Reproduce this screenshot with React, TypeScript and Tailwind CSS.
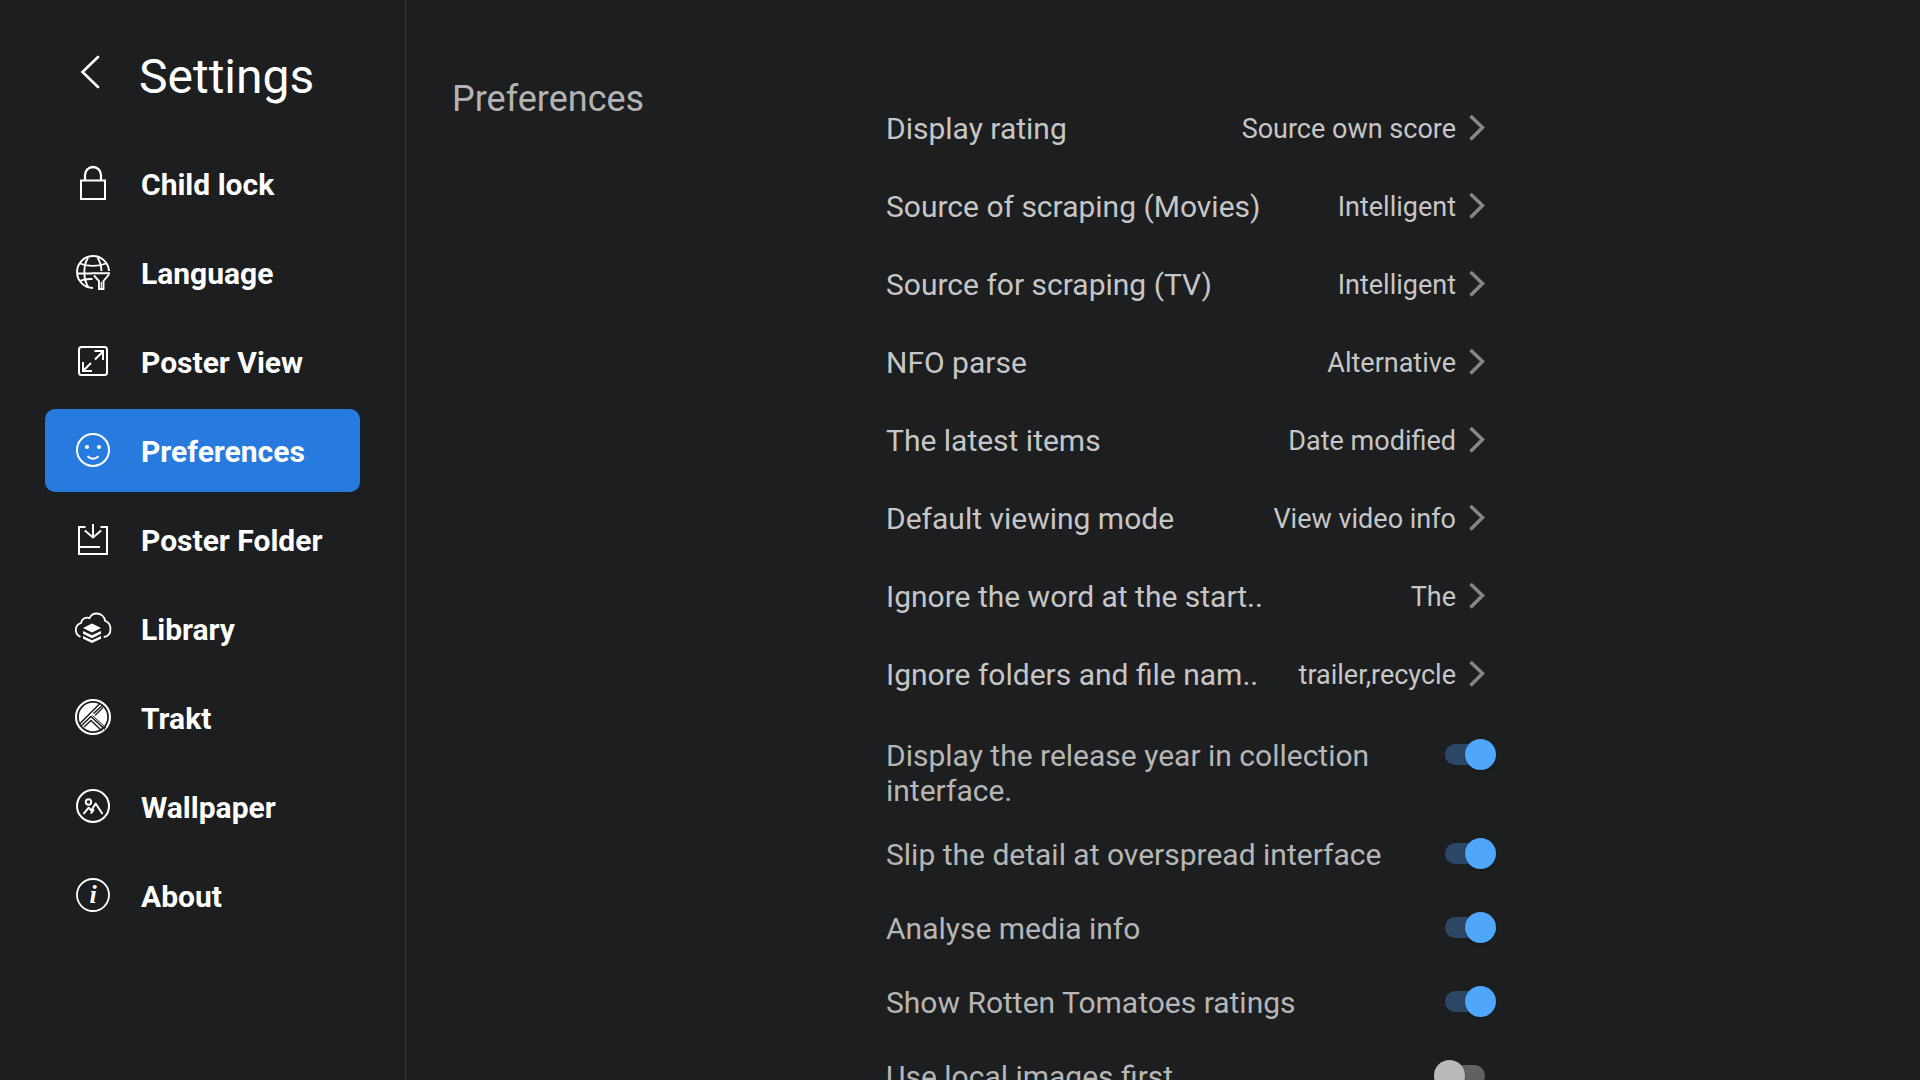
import { useId, useState } from 'react';
import type { ReactNode } from 'react';
import { clsx } from 'clsx';

interface IconProps {
  children: ReactNode;
}

function NavIcon({ children }: IconProps) {
  return (
    <svg
      viewBox="0 0 36 35"
      className="h-[35px] w-9 shrink-0 overflow-visible"
      fill="none"
      stroke="currentColor"
      strokeWidth="2"
      aria-hidden="true"
    >
      {children}
    </svg>
  );
}

const LockIcon = () => (
  <NavIcon>
    <rect x="6" y="14.5" width="24" height="18.5" />
    <path d="M10 14V9a8 8 0 0 1 16 0v5" strokeWidth="2.3" />
  </NavIcon>
);

const GlobeIcon = () => (
  <NavIcon>
    <g strokeWidth="1.9">
      <path d="M18 33A16 16 0 1 1 34 16" />
      <path d="M13 2.8C8 11 8 24 13.5 32.5M22.5 2.5c2.5 4 3.8 8.500 4 13.500" />
      <path d="M5 8.500c7 3.200 19 3.200 26 0M2.200 18.500H17M4.500 26c4-1.800 8-2.300 13-2" />
      <path d="M16.500 18.300H35M19 20.500l5 5.500v8h4.500v-8l5.500-6.500" />
      <path d="M26.300 27v7" strokeWidth="1.200" />
    </g>
  </NavIcon>
);

const ExpandIcon = () => (
  <NavIcon>
    <rect x="4" y="3" width="28" height="28" rx="2.500" />
    <path d="M19.500 7h8.500v9M28 7.500l-8 8M17 27H8v-9M8.500 26.500l7.500-7.500" />
  </NavIcon>
);

const SmileIcon = () => (
  <NavIcon>
    <circle cx="18" cy="17" r="16" />
    <circle cx="12" cy="14" r="2.100" fill="currentColor" stroke="none" />
    <circle cx="24" cy="14" r="2.100" fill="currentColor" stroke="none" />
    <path d="M12.500 23.200c3 3.400 8 3.400 11 0" />
  </NavIcon>
);

const FolderIcon = () => (
  <NavIcon>
    <path d="M10.500 5H4v27h28V5h-6.500M4 25h21" />
    <path d="M18 2v13M9.800 8.500l8.200 7 8.200-7" />
  </NavIcon>
);

const LibraryIcon = () => (
  <NavIcon>
    <path
      d="M5.500 26C2.500 24.500.8 22.300.8 19c0-3.600 2.400-6.300 5.400-7.200C6.500 8 10.500 5.500 14.500 7.200 16 4 18.500 2.500 21.500 2.500c4.500 0 8 3 8.800 7.500 3.300 1.200 5.200 4.200 5.200 8 0 4.500-2.500 7.500-6.800 8"
      strokeWidth="1.800"
    />
    <g fill="currentColor" stroke="none">
      <path d="m17 12.500 9 4.400-9 4.500-9-4.500z" />
      <path d="m8 20 9 4.300 9-4.300v2.800l-9 4.400-9-4.400z" />
      <path d="m8 25 9 4.300 9-4.300v2.800L17 32l-9-4.200z" />
    </g>
  </NavIcon>
);

const TraktIcon = () => (
  <NavIcon>
    <circle cx="18" cy="17" r="17" strokeWidth="2.100" />
    <circle cx="18" cy="17" r="14.200" fill="currentColor" stroke="none" />
    <g stroke="#1d1e20" strokeWidth="1.500">
      <path d="M5 23.500 24.500 4M18.500 13.500 28 5M6.500 25.500l9.500-9L30 29.500M9 27l7-6.500 11 10.500" />
      <path d="M17.500 15.500 31 28" strokeWidth="1" />
      <path d="m20 15.500 8-8" strokeWidth="1.200" />
    </g>
  </NavIcon>
);

const WallpaperIcon = () => (
  <NavIcon>
    <circle cx="18" cy="17" r="16" />
    <circle cx="13.500" cy="13" r="2.700" />
    <path
      d="m9 24.300 4.700-5.600 2.600 2.800 4.400-7 6.300 9.800M18.500 21l-2.200 3"
      strokeLinecap="round"
      strokeLinejoin="round"
    />
  </NavIcon>
);

const InfoIcon = () => (
  <NavIcon>
    <circle cx="18" cy="17" r="16" strokeWidth="1.800" />
    <text
      x="18"
      y="25"
      textAnchor="middle"
      fill="currentColor"
      stroke="none"
      className="font-['Liberation_Serif',serif] text-[26px] font-bold italic"
    >
      i
    </text>
  </NavIcon>
);

const navItems = [
  { label: 'Child lock', Icon: LockIcon },
  { label: 'Language', Icon: GlobeIcon },
  { label: 'Poster View', Icon: ExpandIcon },
  { label: 'Preferences', Icon: SmileIcon },
  { label: 'Poster Folder', Icon: FolderIcon },
  { label: 'Library', Icon: LibraryIcon },
  { label: 'Trakt', Icon: TraktIcon },
  { label: 'Wallpaper', Icon: WallpaperIcon },
  { label: 'About', Icon: InfoIcon },
];

const options = [
  { label: 'Display rating', value: 'Source own score' },
  { label: 'Source of scraping (Movies)', value: 'Intelligent' },
  { label: 'Source for scraping (TV)', value: 'Intelligent' },
  { label: 'NFO parse', value: 'Alternative' },
  { label: 'The latest items', value: 'Date modified' },
  { label: 'Default viewing mode', value: 'View video info' },
  { label: 'Ignore the word at the start..', value: 'The' },
  { label: 'Ignore folders and file nam..', value: 'trailer,recycle' },
];

const toggles = [
  { label: 'Display the release year in collection interface.', on: true },
  { label: 'Slip the detail at overspread interface', on: true },
  { label: 'Analyse media info', on: true },
  { label: 'Show Rotten Tomatoes ratings', on: true },
  { label: 'Use local images first', on: false },
];

interface OptionRowProps {
  label: string;
  value: string;
}

function OptionRow({ label, value }: OptionRowProps) {
  return (
    <button type="button" className="flex h-[78px] w-full cursor-pointer items-center pr-[10px] text-left text-[#c6c6c6]">
      <span className="flex-1 text-[30px] leading-[35px]">{label}</span>
      <span className="pt-0.5 text-[27px] leading-[35px]">{value}</span>
      <svg viewBox="0 0 18 26" className="ml-3 h-[26px] w-[18px]" fill="none" stroke="#868686" strokeWidth="3.500" aria-hidden="true">
        <path d="M2.500 1 14.500 12.500 2.500 24.500" />
      </svg>
    </button>
  );
}

interface ToggleRowProps {
  label: string;
  on: boolean;
}

function ToggleRow({ label, on }: ToggleRowProps) {
  const id = useId();
  const [checked, setChecked] = useState(on);

  return (
    <div className="flex min-h-[74px] items-center pt-[10px] pb-[9px]">
      <div className="flex flex-1 items-start justify-between">
        <label htmlFor={id} className="max-w-[510px] text-[30px] leading-[35px] text-[#b6b6b6]">
          {label}
        </label>
        {/* Knob overhangs the track on both ends */}
        <input
          id={id}
          type="checkbox"
          role="switch"
          checked={checked}
          onChange={(e) => setChecked(e.target.checked)}
          className="relative h-[35px] w-[62px] shrink-0 cursor-pointer appearance-none before:absolute before:top-[6px] before:left-[11px] before:h-[21px] before:w-10 before:rounded-full before:bg-[#616163] after:absolute after:top-px after:left-0 after:size-[31px] after:rounded-full after:bg-[#b9b9b9] after:shadow-[0_1px_2px_rgba(0,0,0,0.35)] checked:before:bg-[#2c4866] checked:after:left-[31px] checked:after:bg-[#4fa6fb]"
        />
      </div>
    </div>
  );
}

export default function App() {
  const [active, setActive] = useState('Preferences');

  return (
    <div className="flex h-screen overflow-hidden bg-[#1d1e20] font-[Roboto,sans-serif] text-white">
      {/* Sidebar */}
      <aside className="w-[406px] shrink-0 border-r border-[#353638] px-[45px] pt-12">
        <header className="mb-[37px] flex items-start gap-7 pl-[30px]">
          <button type="button" aria-label="Back" className="flex h-12 w-9 cursor-pointer items-center">
            <svg viewBox="0 0 36 36" className="size-9" fill="none" stroke="currentColor" strokeWidth="2.600" strokeLinecap="round" aria-hidden="true">
              <path d="M23 3 7.500 18 23 33" />
            </svg>
          </button>
          <h1 className="pt-px text-5xl leading-[56px]">Settings</h1>
        </header>
        <nav className="flex flex-col gap-[6px]">
          {navItems.map(({ label, Icon }) => (
            <button
              key={label}
              type="button"
              aria-current={label === active ? 'page' : undefined}
              onClick={() => setActive(label)}
              className={clsx(
                'flex h-[83px] cursor-pointer items-center gap-[30px] rounded-[10px] pl-[30px] text-left text-[30px] leading-[35px] font-bold',
                label === active && 'bg-[#287bde]'
              )}
            >
              <Icon />
              <span className="pt-0.5">{label}</span>
            </button>
          ))}
        </nav>
      </aside>

      {/* Content */}
      <main className="flex flex-1 overflow-y-auto pl-[46px] [scrollbar-width:none]">
        <h2 className="w-[434px] shrink-0 pt-[78px] text-4xl leading-[42px] text-[#b3b3b3]">Preferences</h2>
        <div className="w-full max-w-[610px] pt-[89px]">
          {options.map((option) => (
            <OptionRow key={option.label} {...option} />
          ))}
          <div className="mt-[15px]">
            {toggles.map((toggle) => (
              <ToggleRow key={toggle.label} {...toggle} />
            ))}
          </div>
        </div>
      </main>
    </div>
  );
}
